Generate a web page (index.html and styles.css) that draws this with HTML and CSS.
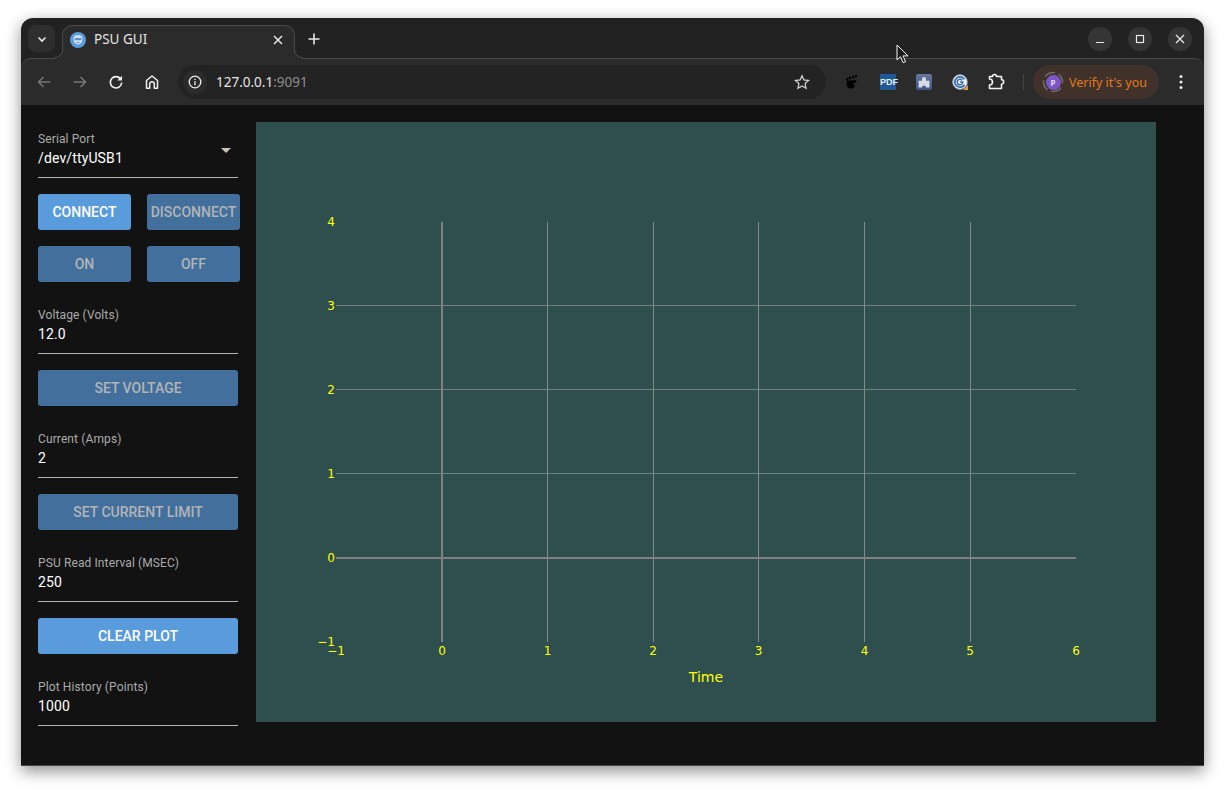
FILE: index.html
```html
<!DOCTYPE html>
<html lang="en">
<head>
<meta charset="utf-8">
<title>PSU GUI</title>
<link rel="stylesheet" href="styles.css">
</head>
<body>
<div class="window">
  <header class="tabstrip">
    <button class="tab-list"><svg width="12" height="12" viewBox="0 0 12 12"><path d="M2.500 4.500 6 8l3.500-3.500" fill="none" stroke="#e6e6e6" stroke-width="1.700"/></svg></button>
    <div class="tab">
      <svg class="favicon" width="16" height="16" viewBox="0 0 16 16"><circle cx="8" cy="8" r="8" fill="#5a9bdc"/><path d="M3.500 6.500C3.500 4 5.500 3 8 3s4.500 1 4.500 3.500c0 3-1.500 6-4.500 6s-4.500-3-4.500-6z" fill="#cfe0f3"/><rect x="4.500" y="6" width="7" height="2.200" rx="1" fill="#5a8fc8"/><rect x="6" y="10" width="4" height="1" fill="#7fa9d8"/></svg>
      <span class="tab-title">PSU GUI</span>
      <svg class="tab-close" width="10" height="10" viewBox="0 0 10 10"><path d="M1 1l8 8M9 1 1 9" stroke="#e6e6e6" stroke-width="1.500"/></svg>
    </div>
    <svg class="new-tab" width="12" height="12" viewBox="0 0 12 12"><path d="M6 .5v11M.5 6h11" stroke="#e8e8e8" stroke-width="1.600"/></svg>
    <div class="win-controls">
      <span class="win-btn"><svg width="10" height="10" viewBox="0 0 10 10"><path d="M1 8.500h8" stroke="#e8e8e8" stroke-width="1.200"/></svg></span>
      <span class="win-btn"><svg width="10" height="10" viewBox="0 0 10 10"><rect x="1.500" y="1.500" width="7" height="7" fill="none" stroke="#e8e8e8" stroke-width="1.200"/></svg></span>
      <span class="win-btn"><svg width="10" height="10" viewBox="0 0 10 10"><path d="M1 1l8 8M9 1 1 9" stroke="#e8e8e8" stroke-width="1.300"/></svg></span>
    </div>
  </header>

  <nav class="toolbar">
    <span class="tool"><svg width="16" height="16" viewBox="0 0 16 16"><path d="M14.500 8h-12M7.500 3 2.500 8l5 5" fill="none" stroke="#777" stroke-width="1.500"/></svg></span>
    <span class="tool"><svg width="16" height="16" viewBox="0 0 16 16"><path d="M1.500 8h12M8.500 3l5 5-5 5" fill="none" stroke="#777" stroke-width="1.500"/></svg></span>
    <span class="tool"><svg width="16" height="16" viewBox="0 0 16 16"><path d="M12.800 5.200A5.700 5.700 0 1 0 13.700 8.500" fill="none" stroke="#f0f0f0" stroke-width="1.600"/><path d="M14 1.800v4.700H9.300z" fill="#f0f0f0"/></svg></span>
    <span class="tool"><svg width="16" height="16" viewBox="0 0 16 16"><path d="M2.500 14.200V6.500L8 2l5.500 4.500v7.700h-3.200V10a2.300 2.300 0 0 0-4.600 0v4.200z" fill="none" stroke="#f0f0f0" stroke-width="1.500" stroke-linejoin="round"/></svg></span>
    <div class="omnibox">
      <span class="site-info"><svg width="14" height="14" viewBox="0 0 14 14"><circle cx="7" cy="7" r="5.800" fill="none" stroke="#eee" stroke-width="1.300"/><path d="M7 6.200v4M7 3.800v1.300" stroke="#eee" stroke-width="1.300"/></svg></span>
      <span class="url">127.0.0.1<span class="url-port">:9091</span></span>
      <svg class="star" width="16" height="16" viewBox="0 0 16 16"><path d="M8 1.800l1.900 4.200 4.600.5-3.400 3.100.9 4.600L8 11.900l-4 2.300.9-4.600L1.500 6.500l4.600-.5z" fill="none" stroke="#d0d0d0" stroke-width="1.300"/></svg>
    </div>
    <div class="extensions">
      <span class="tool"><svg width="16" height="16" viewBox="0 0 16 16"><path d="M2.500 9.500C2.500 7 5 5.800 8 6.300c1.500.3 2.500-.3 3.300-.3 1.700 0 1.500 2.300-.4 2.800-2 .5-2.200 1.200-.9 1.900 1.300.8.500 3.800-3 3.800-3 0-4.500-2.300-4.500-5z" fill="#000"/><ellipse cx="3.300" cy="5.600" rx="1.300" ry="1.500" fill="#000"/><ellipse cx="6" cy="3.800" rx="1.300" ry="1.500" fill="#000"/><ellipse cx="9.200" cy="3" rx="1.200" ry="1.300" fill="#000"/><ellipse cx="12" cy="2.200" rx="1.100" ry="1.200" fill="#000"/></svg></span>
      <span class="tool"><span class="pdf-ext">PDF</span></span>
      <span class="tool"><svg width="16" height="16" viewBox="0 0 16 16"><defs><linearGradient id="tile" x1="0" y1="0" x2="0" y2="1"><stop offset="0" stop-color="#66769c"/><stop offset="1" stop-color="#3f5486"/></linearGradient></defs><rect width="16" height="16" rx="2" fill="url(#tile)"/><path d="M2.500 6.800H6V5a2 2 0 0 1 4 0v1.800h3.500v6.700H10a2 2 0 0 0-4 0H2.500v-2.200a1.700 1.700 0 0 0 0-2.300z" fill="#d6dae4"/></svg></span>
      <span class="tool"><svg width="16" height="16" viewBox="0 0 16 16"><circle cx="8" cy="8" r="7.300" fill="#f0f3f8" stroke="#8fa3c0"/><path d="M12.500 5.300A5.200 5.200 0 1 0 12.500 10.700" fill="none" stroke="#3a6ea8" stroke-width="1.700"/><path d="M10.200 6.300A2.800 2.800 0 1 0 10.800 8H8" fill="none" stroke="#3a6ea8" stroke-width="1.500"/><path d="M11 16l5-5v5z" fill="#e0a040"/></svg></span>
      <span class="tool"><svg width="18" height="18" viewBox="0 0 18 18"><path d="M2.500 3.500h3a2 2 0 0 1 4 0h5v3.300a2.200 2.200 0 0 1 0 4.400v4.300h-12V12a3 3 0 0 0 0-6z" fill="none" stroke="#f2f2f2" stroke-width="1.600" stroke-linejoin="round"/></svg></span>
    </div>
    <span class="tool-sep"></span>
    <div class="profile-pill">
      <span class="avatar">
        <svg class="avatar-ring" width="22" height="22" viewBox="0 0 22 22"><circle cx="11" cy="11" r="9.500" fill="none" stroke="#6e6a66" stroke-width="1.600" stroke-dasharray="11 4" stroke-dashoffset="-5.500"/></svg>
        <span class="avatar-letter">P</span>
      </span>
      <span class="verify">Verify it's you</span>
    </div>
    <span class="tool"><svg width="4" height="16" viewBox="0 0 4 16"><circle cx="2" cy="2.500" r="1.500" fill="#eee"/><circle cx="2" cy="8" r="1.500" fill="#eee"/><circle cx="2" cy="13.500" r="1.500" fill="#eee"/></svg></span>
  </nav>

  <main class="page">
    <aside class="sidebar">
      <div class="field select-field">
        <label class="field-label">Serial Port</label>
        <div class="field-value">/dev/ttyUSB1</div>
        <span class="caret"></span>
      </div>
      <div class="btn-row">
        <button class="btn">Connect</button>
        <button class="btn disabled">Disconnect</button>
      </div>
      <div class="btn-row">
        <button class="btn disabled">On</button>
        <button class="btn disabled">Off</button>
      </div>
      <div class="field spaced">
        <label class="field-label">Voltage (Volts)</label>
        <div class="field-value">12.0</div>
      </div>
      <button class="btn wide disabled">Set Voltage</button>
      <div class="field spaced">
        <label class="field-label">Current (Amps)</label>
        <div class="field-value">2</div>
      </div>
      <button class="btn wide disabled">Set Current Limit</button>
      <div class="field spaced">
        <label class="field-label">PSU Read Interval (MSEC)</label>
        <div class="field-value">250</div>
      </div>
      <button class="btn wide">Clear Plot</button>
      <div class="field spaced">
        <label class="field-label">Plot History (Points)</label>
        <div class="field-value">1000</div>
      </div>
    </aside>
    <section class="chart">
      <svg class="plot" width="900" height="600" viewBox="0 0 900 600">
        <g class="grid">
          <path d="M80 183.500H820M80 267.500H820M80 351.500H820"/>
          <path class="grid-v" d="M291.500 100V520M397.500 100V520M502.500 100V520M608.500 100V520M714.500 100V520"/>
        </g>
        <g class="axis">
          <path d="M186 100V520M80 436H820"/>
        </g>
        <g class="ticks tick-y">
          <text x="79" y="104">4</text>
          <text x="79" y="188">3</text>
          <text x="79" y="272">2</text>
          <text x="79" y="356">1</text>
          <text x="79" y="440">0</text>
          <text x="79" y="524">−1</text>
        </g>
        <g class="ticks tick-x">
          <text x="80" y="533">−1</text>
          <text x="186" y="533">0</text>
          <text x="291.500" y="533">1</text>
          <text x="397" y="533">2</text>
          <text x="502.500" y="533">3</text>
          <text x="608.500" y="533">4</text>
          <text x="714" y="533">5</text>
          <text x="820" y="533">6</text>
        </g>
        <text class="axis-title" x="450" y="560">Time</text>
      </svg>
    </section>
  </main>
</div>
<svg class="cursor" width="14" height="20" viewBox="0 0 14 20"><path d="M1 1v15l3.500-3.300 2.600 6 2.500-1-2.600-5.800H12z" fill="#1c1c1c" stroke="#f4f4f4" stroke-width="1"/></svg>
</body>
</html>
```
FILE: styles.css
```css
* { box-sizing: border-box; }
html, body { margin: 0; height: 100%; background: #fff; overflow: hidden; }
body { padding: 18px 21px 24px; font-family: Roboto, sans-serif; }

.window {
  height: 748px;
  border-radius: 12px 12px 0 0;
  background: #222;
  box-shadow: 0 5px 16px rgba(0,0,0,.45);
  border-bottom: 1px solid #444;
  display: flex;
  flex-direction: column;
  overflow: hidden;
}

/* tab strip */
.tabstrip { height: 40px; flex: none; display: flex; align-items: flex-start; padding: 7px 0 0 7px; position: relative; }
.tab-list { width: 27px; height: 27px; border: 0; padding: 0; border-radius: 8px; background: #2e2e2e; display: flex; align-items: center; justify-content: center; }
.tab {
  width: 233px; height: 34px; margin-left: 7px; padding: 0 11px 6px 7px;
  display: flex; align-items: center; position: relative; z-index: 2;
  background: #2b2b2b; border: 1px solid #4a4a4a; border-bottom: 0; border-radius: 10px 10px 0 0;
  margin-bottom: -1px;
}
.tab::before, .tab::after { content: ""; position: absolute; bottom: 1px; width: 8px; height: 8px; border-bottom: 1px solid #4a4a4a; }
.tab::before { left: -9px; border-right: 1px solid #4a4a4a; border-bottom-right-radius: 8px; box-shadow: 2px 2px 0 1px #2b2b2b; }
.tab::after { right: -9px; border-left: 1px solid #4a4a4a; border-bottom-left-radius: 8px; box-shadow: -2px 2px 0 1px #2b2b2b; }
.favicon { flex: none; }
.tab-title { flex: 1; margin: -2px 0 0 8px; font: 13.5px "Noto Sans", sans-serif; color: #e3e3e3; }
.new-tab { margin: 8px 0 0 13px; }
.win-controls { display: flex; gap: 16px; margin-left: auto; padding-right: 12px; margin-top: 2px; }
.win-btn { width: 24px; height: 24px; border-radius: 50%; background: #353535; display: flex; align-items: center; justify-content: center; }

/* toolbar */
.toolbar {
  height: 47px; flex: none; display: flex; align-items: center; padding: 0 5px;
  background: #2b2b2b; border-top: 1px solid #4a4a4a; border-radius: 10px 10px 0 0;
}
.tool { width: 36px; height: 36px; flex: none; display: flex; align-items: center; justify-content: center; }
.omnibox { width: 648px; height: 34px; margin-left: 8px; border-radius: 17px; background: #232323; display: flex; align-items: center; padding: 0 16px 0 5px; flex: none; }
.site-info { width: 24px; height: 24px; border-radius: 50%; background: #2b2b2b; display: flex; align-items: center; justify-content: center; }
.url { flex: 1; margin-left: 9px; font: 13.5px "Noto Sans", sans-serif; color: #e6e6e6; }
.url-port { color: #8e8e8e; }
.extensions { display: flex; margin-left: 8px; }
.pdf-ext { width: 16px; height: 16px; background: #1f5a96; color: #e6eef6; font: 700 9px/16px "Liberation Sans", sans-serif; text-align: center; display: block; }
.tool-sep { width: 1px; height: 16px; background: #444; margin: 0 9px; flex: none; }
.profile-pill { width: 126px; height: 34px; border-radius: 17px; background: #40322a; display: flex; align-items: center; padding-left: 9px; flex: none; margin-right: 4px; }
.avatar { width: 22px; height: 22px; flex: none; position: relative; display: flex; align-items: center; justify-content: center; }
.avatar-ring { position: absolute; left: 0; top: 0; }
.avatar-letter { width: 15px; height: 15px; border-radius: 50%; background: #7d55c7; color: #e6dcf8; font: 700 8px/15px "Noto Sans", sans-serif; text-align: center; }
.verify { margin-left: 5px; font: 12.5px "Noto Sans", sans-serif; color: #e07a1f; white-space: nowrap; }

/* page */
.page { flex: 1; min-height: 0; display: flex; background: #121212; padding: 17px 0 0 17px; gap: 18px; align-items: flex-start; }
.sidebar { width: 200px; flex: none; padding-top: 8px; }
.field { height: 48px; border-bottom: 1px solid #b4b4b4; position: relative; padding-top: 2px; }
.field.spaced { margin-top: 24px; }
.field-label { display: block; font-size: 12px; line-height: 14px; color: #ababab; letter-spacing: .00938em; }
.field-value { margin-top: 3px; font-size: 14px; line-height: 18px; color: #fff; letter-spacing: .00938em; }
.caret { position: absolute; right: 7px; top: 18px; border: 5px solid transparent; border-top: 5px solid #c8c4b4; border-bottom: 0; }

.btn-row { display: flex; gap: 16px; margin-top: 16px; width: 202px; }
.btn-row + .field { margin-top: 24px; }
.btn {
  height: 36px; flex: 1 1 0; min-width: 0; padding: 0; border: 0; border-radius: 3px;
  background: #5a9bdc; color: #fff; font: 500 14px/36px Roboto, sans-serif; text-transform: uppercase; white-space: nowrap;
}
.btn.disabled { background: #436f9c; color: #b2b4b7; }
.btn.wide { display: block; width: 200px; margin-top: 16px; }

/* chart */
.chart { width: 900px; height: 600px; background: #2f4f4f; flex: none; }
.plot { display: block; }
.grid path { stroke: #74807f; stroke-width: 1; fill: none; }
.grid .grid-v { stroke: #808a8a; }
.axis path { stroke: #808080; stroke-width: 2; fill: none; }
.ticks text { fill: #ffff00; font: 12px "DejaVu Sans", sans-serif; }
.tick-y text { text-anchor: end; }
.tick-x text { text-anchor: middle; }
.axis-title { fill: #ffff00; font: 14px "DejaVu Sans", sans-serif; text-anchor: middle; }

.cursor { position: absolute; left: 896px; top: 44px; }
```
